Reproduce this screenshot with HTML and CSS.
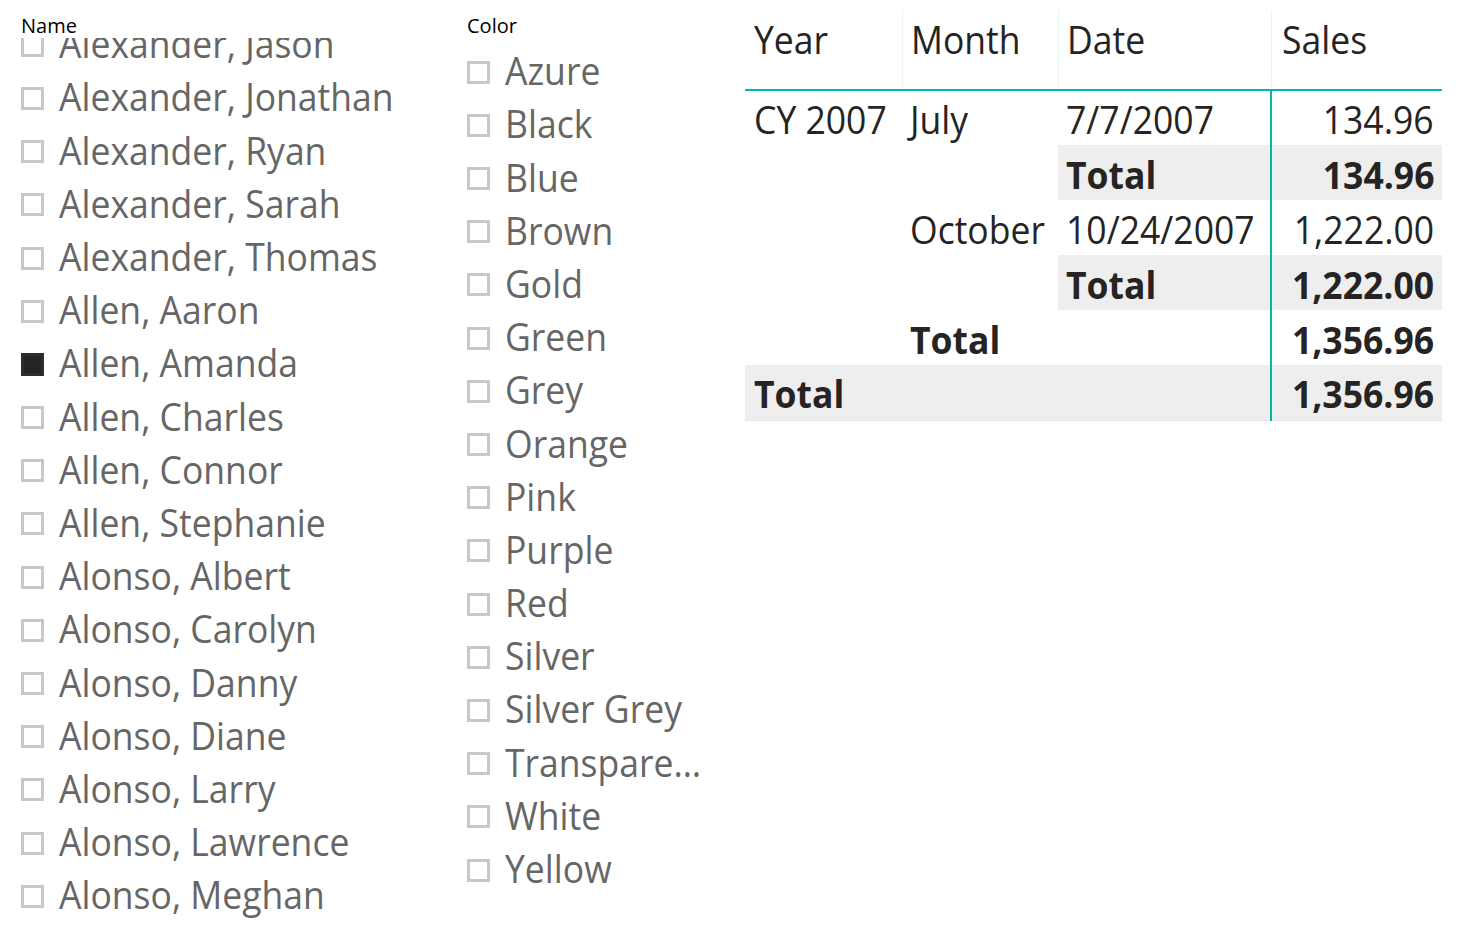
FILE: index.html
```html
<!DOCTYPE html>
<html lang="en">
<head>
<meta charset="utf-8">
<title>Sales report</title>
<link rel="stylesheet" href="styles.css">
</head>
<body>
<div class="page">
  <section class="slicer slicer-name">
    <div class="slicer-title">Name</div>
    <div class="slicer-viewport">
      <ul class="slicer-list scrolled">
        <li class="item"><span class="box"></span><span class="t">Alexander, Jason</span></li>
        <li class="item"><span class="box"></span><span class="t">Alexander, Jonathan</span></li>
        <li class="item"><span class="box"></span><span class="t">Alexander, Ryan</span></li>
        <li class="item"><span class="box"></span><span class="t">Alexander, Sarah</span></li>
        <li class="item"><span class="box"></span><span class="t">Alexander, Thomas</span></li>
        <li class="item"><span class="box"></span><span class="t">Allen, Aaron</span></li>
        <li class="item"><span class="box checked"></span><span class="t">Allen, Amanda</span></li>
        <li class="item"><span class="box"></span><span class="t">Allen, Charles</span></li>
        <li class="item"><span class="box"></span><span class="t">Allen, Connor</span></li>
        <li class="item"><span class="box"></span><span class="t">Allen, Stephanie</span></li>
        <li class="item"><span class="box"></span><span class="t">Alonso, Albert</span></li>
        <li class="item"><span class="box"></span><span class="t">Alonso, Carolyn</span></li>
        <li class="item"><span class="box"></span><span class="t">Alonso, Danny</span></li>
        <li class="item"><span class="box"></span><span class="t">Alonso, Diane</span></li>
        <li class="item"><span class="box"></span><span class="t">Alonso, Larry</span></li>
        <li class="item"><span class="box"></span><span class="t">Alonso, Lawrence</span></li>
        <li class="item"><span class="box"></span><span class="t">Alonso, Meghan</span></li>
      </ul>
    </div>
  </section>

  <section class="slicer slicer-color">
    <div class="slicer-title">Color</div>
    <div class="slicer-viewport">
      <ul class="slicer-list">
        <li class="item"><span class="box"></span><span class="t">Azure</span></li>
        <li class="item"><span class="box"></span><span class="t">Black</span></li>
        <li class="item"><span class="box"></span><span class="t">Blue</span></li>
        <li class="item"><span class="box"></span><span class="t">Brown</span></li>
        <li class="item"><span class="box"></span><span class="t">Gold</span></li>
        <li class="item"><span class="box"></span><span class="t">Green</span></li>
        <li class="item"><span class="box"></span><span class="t">Grey</span></li>
        <li class="item"><span class="box"></span><span class="t">Orange</span></li>
        <li class="item"><span class="box"></span><span class="t">Pink</span></li>
        <li class="item"><span class="box"></span><span class="t">Purple</span></li>
        <li class="item"><span class="box"></span><span class="t">Red</span></li>
        <li class="item"><span class="box"></span><span class="t">Silver</span></li>
        <li class="item"><span class="box"></span><span class="t">Silver Grey</span></li>
        <li class="item"><span class="box"></span><span class="t trunc">Transparent</span></li>
        <li class="item"><span class="box"></span><span class="t">White</span></li>
        <li class="item"><span class="box"></span><span class="t">Yellow</span></li>
      </ul>
    </div>
  </section>

  <section class="matrix">
    <table class="grid">
      <colgroup>
        <col class="c-year"><col class="c-month"><col class="c-date"><col class="c-sales">
      </colgroup>
      <thead>
        <tr>
          <th><span class="t">Year</span></th>
          <th><span class="t">Month</span></th>
          <th><span class="t">Date</span></th>
          <th class="h-sales"><span class="t">Sales</span></th>
        </tr>
      </thead>
      <tbody>
        <tr>
          <td><span class="t">CY 2007</span></td>
          <td><span class="t">July</span></td>
          <td><span class="t">7/7/2007</span></td>
          <td class="num"><span class="t r">134.96</span></td>
        </tr>
        <tr class="sub">
          <td></td>
          <td></td>
          <td class="shade"><span class="t">Total</span></td>
          <td class="num shade"><span class="t r">134.96</span></td>
        </tr>
        <tr>
          <td></td>
          <td><span class="t">October</span></td>
          <td><span class="t">10/24/2007</span></td>
          <td class="num"><span class="t r">1,222.00</span></td>
        </tr>
        <tr class="sub">
          <td></td>
          <td></td>
          <td class="shade"><span class="t">Total</span></td>
          <td class="num shade"><span class="t r">1,222.00</span></td>
        </tr>
        <tr class="sub">
          <td></td>
          <td><span class="t">Total</span></td>
          <td></td>
          <td class="num"><span class="t r">1,356.96</span></td>
        </tr>
        <tr class="sub grand">
          <td class="shade"><span class="t">Total</span></td>
          <td class="shade"></td>
          <td class="shade"></td>
          <td class="num shade"><span class="t r">1,356.96</span></td>
        </tr>
      </tbody>
    </table>
  </section>
</div>
</body>
</html>
```

FILE: styles.css
```css
* { box-sizing: border-box; }

html, body {
  margin: 0;
  padding: 0;
  background: #ffffff;
}

body {
  font-family: "Open Sans", "Noto Sans", "DejaVu Sans", sans-serif;
  color: #252423;
}

.page {
  display: flex;
  align-items: flex-start;
  height: 927px;
  overflow: hidden;
}

/* ---------- slicers ---------- */
.slicer {
  display: flex;
  flex-direction: column;
  height: 927px;
  padding-left: 21px;
}

.slicer-name { width: 446px; }
.slicer-color { width: 299px; }

.slicer-title {
  padding-top: 13px;
  height: 38px;
  font-size: 20px;
  line-height: 25px;
  color: #000000;
}

.slicer-viewport {
  flex: 1;
  overflow: hidden;
}

.slicer-list {
  list-style: none;
  margin: 7.6px 0 0 0;
  padding: 0;
}

.slicer-list.scrolled {
  margin-top: -19.3px;
}

.item {
  display: flex;
  align-items: center;
  height: 53.2px;
  font-size: 38px;
  color: #666666;
  white-space: nowrap;
}

.box {
  flex: none;
  width: 23px;
  height: 23px;
  margin-left: 0;
  border: 3px solid #c8c8c8;
  background: #ffffff;
}

.box.checked {
  background: #252423;
  border-color: #2e2e2e;
}

.item .t {
  margin-left: 15px;
  margin-bottom: 4px;
}

.t {
  display: inline-block;
  transform: scaleX(0.935);
  transform-origin: left center;
  white-space: nowrap;
}

.t.r {
  transform-origin: right center;
}

.t.trunc {
  max-width: 214px;
  overflow: hidden;
  text-overflow: ellipsis;
}

/* ---------- matrix ---------- */
.matrix {
  padding-top: 10px;
}

.grid {
  border-collapse: collapse;
  table-layout: fixed;
  width: 697px;
  font-size: 38px;
  color: #252423;
}

.c-year { width: 157px; }
.c-month { width: 156px; }
.c-date { width: 213px; }
.c-sales { width: 171px; }

.grid th {
  height: 80px;
  padding: 3px 7px 0 8px;
  vertical-align: top;
  text-align: left;
  font-weight: 400;
  border-bottom: 2px solid #01b8aa;
  border-left: 1px solid #e6f4f3;
  line-height: 52px;
}

.grid th:first-child { border-left: none; padding-left: 9px; }
.grid th.h-sales { padding-left: 10px; }

.grid tbody tr:first-child td { border-top: 1px solid #ffffff; }

.grid td {
  height: 55px;
  padding: 2px 7px 0 8px;
  vertical-align: middle;
  line-height: 52px;
  white-space: nowrap;
}

.grid td:first-child { padding-left: 9px; }

.grid td.num {
  text-align: right;
  border-left: 2px solid #01b8aa;
  padding-right: 8px;
}

.grid tr.sub td { font-weight: 700; }

.grid td.shade { background: #eeeeee; }

.grid tr.grand td {
  border-bottom: 1px solid #e4eaea;
}
```
